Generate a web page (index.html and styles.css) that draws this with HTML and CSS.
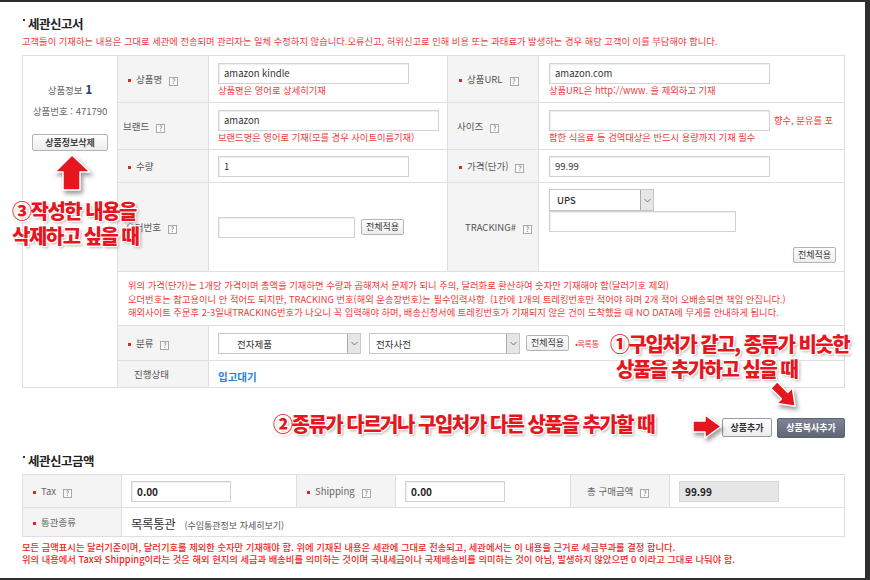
FILE: index.html
```html
<!DOCTYPE html>
<html lang="ko">
  <head>
    <meta charset="UTF-8" />
    <title>세관신고서</title>
    <link rel="stylesheet" href="styles.css">
  </head>
  <body>
    <div class="screen">
      <h2 class="sec-title">세관신고서</h2>
      <p class="warn">고객들이 기재하는 내용은 그대로 세관에 전송되며 관리자는 일체 수정하지 않습니다.오류신고, 허위신고로 인해 비용 또는 과태료가 발생하는 경우 해당 고객이 이를 부담해야 합니다.</p>

      <table class="grid main">
        <colgroup>
          <col class="w-info"><col class="w-lab"><col class="w-val"><col class="w-lab"><col>
        </colgroup>
        <tr class="h47">
          <td class="info" rowspan="7">
            <div class="info-title">상품정보 <b>1</b></div>
            <div class="info-no">상품번호 : 471790</div>
            <button class="btn btn-del">상품정보삭제</button>
          </td>
          <th class="ind"><span class="req">상품명</span><i class="q">?</i></th>
          <td class="val">
            <input class="in w190" value="amazon kindle">
            <p class="hint">상품명은 영어로 상세히기재</p>
          </td>
          <th class="ind2"><span class="req">상품URL</span><i class="q">?</i></th>
          <td class="val val2">
            <input class="in w220" value="amazon.com">
            <p class="hint">상품URL은 http://www. 을 제외하고 기재</p>
          </td>
        </tr>
        <tr class="h47">
          <th>브랜드<i class="q">?</i></th>
          <td class="val">
            <input class="in w220" value="amazon">
            <p class="hint">브랜드명은 영어로 기재(모를 경우 사이트이름기재)</p>
          </td>
          <th class="ind2">사이즈<i class="q">?</i></th>
          <td class="val val2">
            <div class="line">
              <input class="in w220" value="">
              <span class="hint side">향수, 분유를 포</span>
            </div>
            <p class="hint">함한 식음료 등 검역대상은 반드시 용량까지 기재 필수</p>
          </td>
        </tr>
        <tr class="h33">
          <th class="ind"><span class="req">수량</span></th>
          <td class="val"><input class="in w190" value="1"></td>
          <th class="ind2"><span class="req">가격(단가)</span><i class="q">?</i></th>
          <td class="val val2"><input class="in w220" value="99.99"></td>
        </tr>
        <tr class="h89">
          <th class="ind">오더번호<i class="q">?</i></th>
          <td class="val">
            <div class="line">
              <input class="in w135" value="">
              <button class="btn">전체적용</button>
            </div>
          </td>
          <th class="track">TRACKING#<i class="q">?</i></th>
          <td class="val val2 track-val">
            <div class="sel sel-ups">
              <span class="sel-txt">UPS</span>
              <span class="sel-arr"><svg width="7" height="5" viewBox="0 0 7 5"><path d="M0.5 1l3 3 3-3" fill="none" stroke="#777" stroke-width="1"/></svg></span>
            </div>
            <input class="in w186" value="">
            <div class="to-right"><button class="btn">전체적용</button></div>
          </td>
        </tr>
        <tr class="h54">
          <td class="notes" colspan="4">
            위의 가격(단가)는 1개당 가격이며 총액을 기재하면 수량과 곱해져서 문제가 되니 주의, 달러화로 환산하여 숫자만 기재해야 함(달러기호 제외)<br>
            오더번호는 참고용이니 안 적어도 되지만, TRACKING 번호(해외 운송장번호)는 필수입력사항. (1칸에 1개의 트레킹번호만 적어야 하며 2개 적어 오배송되면 책임 안집니다.)<br>
            해외사이트 주문후 2-3일내TRACKING번호가 나오니 꼭 입력해야 하며, 배송신청서에 트레킹번호가 기재되지 않은 건이 도착했을 때 NO DATA에 무게를 안내하게 됩니다.
          </td>
        </tr>
        <tr class="h35">
          <th class="ind"><span class="req">분류</span><i class="q">?</i></th>
          <td class="val" colspan="3">
            <div class="line">
              <div class="sel sel-cat1">
                <span class="sel-txt">전자제품</span>
                <span class="sel-arr"><svg width="7" height="5" viewBox="0 0 7 5"><path d="M0.5 1l3 3 3-3" fill="none" stroke="#777" stroke-width="1"/></svg></span>
              </div>
              <div class="sel sel-cat2">
                <span class="sel-txt">전자사전</span>
                <span class="sel-arr"><svg width="7" height="5" viewBox="0 0 7 5"><path d="M0.5 1l3 3 3-3" fill="none" stroke="#777" stroke-width="1"/></svg></span>
              </div>
              <button class="btn">전체적용</button>
              <span class="tiny-red">•목록통</span>
            </div>
          </td>
        </tr>
        <tr class="h27">
          <th class="ind3">진행상태</th>
          <td class="val" colspan="3"><span class="status">입고대기</span></td>
        </tr>
      </table>

      <div class="actions">
        <button class="btn btn-add">상품추가</button>
        <button class="btn btn-copy">상품복사추가</button>
      </div>

      <h2 class="sec-title sec-title2">세관신고금액</h2>
      <table class="grid sub">
        <colgroup>
          <col class="s-lab"><col class="s-val"><col class="s-lab"><col class="s-val"><col class="s-lab"><col>
        </colgroup>
        <tr class="h33">
          <th class="pl"><span class="req">Tax</span><i class="q">?</i></th>
          <td class="val"><input class="in amt" value="0.00"></td>
          <th class="pl"><span class="req">Shipping</span><i class="q">?</i></th>
          <td class="val"><input class="in amt" value="0.00"></td>
          <th class="pl-wide">총 구매금액<i class="q">?</i></th>
          <td class="val"><input class="in amt ro" value="99.99" readonly></td>
        </tr>
        <tr class="h29">
          <th class="pl"><span class="req">통관종류</span></th>
          <td class="val" colspan="5"><span class="clear-type">목록통관</span><span class="clear-link">(수입통관정보 자세히보기)</span></td>
        </tr>
      </table>
      <p class="foot">
        모든 금액표시는 달러기준이며, 달러기호를 제외한 숫자만 기재해야 함. 위에 기재된 내용은 세관에 그대로 전송되고, 세관에서는 이 내용을 근거로 세금부과를 결정 합니다.<br>
        위의 내용에서 Tax와 Shipping이라는 것은 해외 현지의 세금과 배송비를 의미하는 것이며 국내세금이나 국제배송비를 의미하는 것이 아님, 발생하지 않았으면 0 이라고 그대로 나둬야 함.
      </p>

      <!-- annotations drawn over the form -->
      <svg class="arrow arrow-up" width="48" height="48" viewBox="0 0 48 48">
        <polygon points="22,5 40,22 30,22 30,40 13,40 13,22 5,22" fill="#e5161d" stroke="#fff" stroke-width="1.5" stroke-linejoin="round"/>
      </svg>
      <div class="note note-3">③작성한 내용을<br>삭제하고 싶을 때</div>

      <div class="note note-1">①구입처가 같고, 종류가 비슷한<br><span class="note-1b">상품을 추가하고 싶을 때</span></div>
      <svg class="arrow arrow-diag" width="44" height="44" viewBox="0 0 44 44">
        <g transform="translate(9,9) rotate(45)">
          <polygon points="0,-4.5 15,-4.5 15,-11 30,0 15,11 15,4.5 0,4.5" fill="#e5161d" stroke="#fff" stroke-width="1.5" stroke-linejoin="round"/>
        </g>
      </svg>

      <div class="note note-2">②종류가 다르거나 구입처가 다른 상품을 추가할 때</div>
      <svg class="arrow arrow-right" width="36" height="32" viewBox="0 0 36 32">
        <polygon points="3,9 15,9 15,3 31,14.5 15,26 15,20 3,20" fill="#e5161d" stroke="#fff" stroke-width="1.5" stroke-linejoin="round"/>
      </svg>
    </div>
  </body>
</html>
```

FILE: styles.css
```css
* {
  box-sizing: border-box;
}

body {
  margin: 0;
  background: #2f2f2f;
  font-family: "Noto Sans CJK KR", "Noto Sans", sans-serif;
  color: #444;
}

.screen {
  position: relative;
  width: 865px;
  height: 576px;
  margin-top: 2px;
  padding-left: 22px;
  overflow: hidden;
  background: #fff;
}

/* section headings */

.sec-title {
  position: relative;
  margin: 14px 0 0;
  padding-left: 6px;
  font-size: 12.5px;
  line-height: 16px;
  font-weight: 700;
  letter-spacing: -0.5px;
  color: #222;
}

.sec-title::before {
  content: "";
  position: absolute;
  left: 1px;
  top: 3px;
  width: 2px;
  height: 2px;
  background: #333;
}

.sec-title2 {
  margin-top: 15px;
}

.warn {
  margin: 3px 0 0;
  font-size: 9.3px;
  line-height: 12px;
  color: #f03a3a;
  white-space: nowrap;
}

/* tables */

.grid {
  border-collapse: collapse;
  table-layout: fixed;
  width: 823px;
}

.main {
  margin-top: 8px;
}

.grid th,
.grid td {
  border: 1px solid #dfdfdf;
  padding: 0;
}

.grid th {
  background: #f4f4f4;
  font-weight: 400;
  font-size: 9.5px;
  color: #555;
  text-align: left;
  padding-left: 5px;
  white-space: nowrap;
}

.grid th.ind {
  padding-left: 8px;
}

.grid th.ind2 {
  padding-left: 9px;
}

.grid th.ind3 {
  padding-left: 16px;
}

.grid th.track {
  padding-left: 17px;
}

.w-info { width: 95px; }
.w-lab { width: 91px; }
.w-val { width: 239px; }

.s-lab { width: 99px; }
.s-val { width: 175px; }

.h47 { height: 47px; }
.h33 { height: 33px; }
.h89 { height: 89px; }
.h54 { height: 54px; }
.h35 { height: 35px; }
.h27 { height: 27px; }
.h29 { height: 29px; }

.req::before {
  content: "";
  display: inline-block;
  width: 3px;
  height: 3px;
  margin: 0 5px 0 2px;
  vertical-align: middle;
  background: #d92626;
}

.q {
  display: inline-block;
  width: 9px;
  height: 9px;
  margin-left: 7px;
  border: 1px solid #a8a8a8;
  background: #fbfbfb;
  font-style: normal;
  font-size: 7px;
  line-height: 7px;
  text-align: center;
  color: #666;
  vertical-align: -1px;
}

.val {
  padding-left: 9px !important;
}

.val2 {
  padding-left: 10px !important;
}

.info {
  vertical-align: top;
  text-align: center;
  padding-top: 25px !important;
  font-size: 9.5px;
  color: #666;
}

.info-title {
  line-height: 16px;
}

.info-title b {
  font-size: 12px;
  color: #1f3d73;
}

.info-no {
  margin-top: 6px;
  line-height: 14px;
}

/* form controls */

.in {
  display: block;
  height: 21px;
  padding: 0 5px;
  border: 1px solid #d2d2d2;
  box-shadow: inset 1px 1px 1px #eee;
  font: 9.5px "Noto Sans CJK KR", sans-serif;
  color: #333;
  background: #fff;
}

.w190 { width: 191px; }
.w220 { width: 221px; }
.w135 { width: 137px; }
.w186 { width: 187px; }

.hint {
  margin: 1px 0 0;
  font-size: 9.3px;
  line-height: 11px;
  color: #f03a3a;
  white-space: nowrap;
}

.hint.side {
  margin: 0 0 0 4px;
}

.line {
  display: flex;
  align-items: center;
}

.btn {
  height: 16px;
  padding: 0 4px;
  border: 1px solid #b4b4b4;
  border-radius: 2px;
  background: linear-gradient(#ffffff, #ececec);
  font: 9px "Noto Sans CJK KR", sans-serif;
  line-height: 14px;
  color: #333;
}

.line .btn {
  margin-left: 6px;
}

.btn-del {
  width: 76px;
  height: 17px;
  margin-top: 16px;
  font-weight: 700;
  color: #444;
}

.track-val {
  vertical-align: top;
  padding-top: 6px !important;
  padding-right: 8px !important;
}

.to-right {
  display: flex;
  justify-content: flex-end;
  margin-top: 15px;
}

.sel {
  display: flex;
  height: 22px;
  border: 1px solid #c6c6c6;
  background: #fff;
  font-size: 9.5px;
  color: #333;
}

.sel-txt {
  flex: 1;
  line-height: 20px;
  padding-left: 7px;
}

.sel-arr {
  display: flex;
  align-items: center;
  justify-content: center;
  width: 13px;
  background: #e6e6e6;
  border-left: 1px solid #aaa;
}

.sel-ups {
  width: 105px;
}

.sel-ups .sel-txt {
  font-weight: 500;
}

.sel-cat1 {
  width: 143px;
  height: 21px;
}

.sel-cat1 .sel-txt {
  padding-left: 18px;
}

.sel-cat2 {
  width: 151px;
  height: 21px;
  margin-left: 8px;
}

.sel-cat2 .sel-txt {
  padding-left: 6px;
}

.tiny-red {
  margin-left: 6px;
  font-size: 8px;
  color: #f03a3a;
  letter-spacing: -0.3px;
}

.notes {
  vertical-align: top;
  padding: 7px 0 0 10px !important;
  font-size: 9.3px;
  line-height: 13.5px;
  color: #f03a3a;
  white-space: nowrap;
}

.status {
  font-size: 10.5px;
  font-weight: 700;
  color: #2b7fd6;
}

/* bottom buttons */

.actions {
  display: flex;
  justify-content: flex-end;
  gap: 5px;
  width: 823px;
  margin-top: 30px;
}

.btn-add {
  width: 50px;
  height: 19px;
  font-weight: 700;
  border-color: #9a9a9a;
}

.btn-copy {
  width: 68px;
  height: 20px;
  border: 1px solid #5b6373;
  background: linear-gradient(#7d8595, #5f6777);
  font-weight: 700;
  color: #fff;
}

/* amount table */

.sub {
  margin-top: 5px;
}

.grid th.pl {
  padding-left: 8px;
  color: #666;
}

.grid th.pl-wide {
  padding-left: 16px;
  color: #666;
}

.amt {
  width: 100px;
  font-weight: 700;
  font-size: 10px;
  color: #222;
}

.ro {
  background: #e6e6e6;
  border-color: #d6d6d6;
  box-shadow: none;
}

.clear-type {
  font-size: 12.5px;
  letter-spacing: -0.4px;
  color: #333;
}

.clear-link {
  margin-left: 9px;
  font-size: 9px;
  color: #555;
}

.foot {
  margin: 4px 0 0;
  font-size: 9.3px;
  line-height: 12px;
  font-weight: 500;
  color: #f01e1e;
  white-space: nowrap;
}

/* annotation overlays */

.arrow {
  position: absolute;
  filter: drop-shadow(2px 3px 2px rgba(0, 0, 0, 0.4));
}

.arrow-up {
  left: 50px;
  top: 148px;
}

.arrow-diag {
  left: 765px;
  top: 374px;
}

.arrow-right {
  left: 690px;
  top: 410px;
}

.note {
  position: absolute;
  font-size: 20px;
  line-height: 25px;
  font-weight: 900;
  letter-spacing: -1.5px;
  color: #e5161d;
  white-space: nowrap;
  text-shadow:
    -1px -1px 0 #fff, 1px -1px 0 #fff, -1px 1px 0 #fff, 1px 1px 0 #fff,
    0 0 3px #fff, 2px 2px 3px rgba(0, 0, 0, 0.35);
}

.note-3 {
  left: 12px;
  top: 196px;
}

.note-1 {
  left: 610px;
  top: 329px;
}

.note-1b {
  padding-left: 6px;
}

.note-2 {
  left: 273px;
  top: 409px;
}
```
